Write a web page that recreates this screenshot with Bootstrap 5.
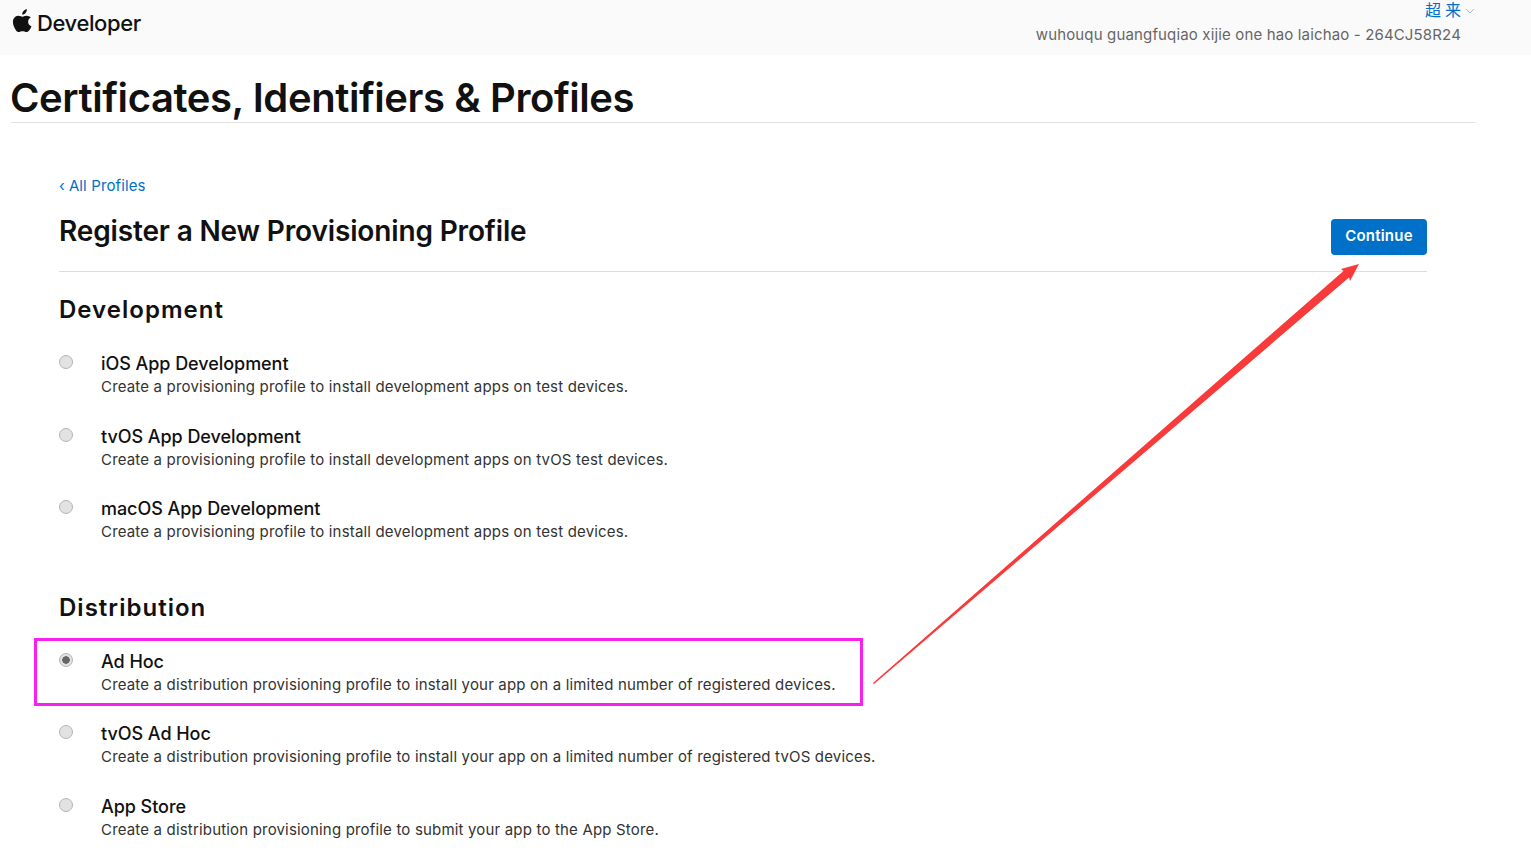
<!DOCTYPE html>
<html lang="en">
<head>
    <meta charset="UTF-8">
    <meta name="viewport" content="width=device-width, initial-scale=1.0">
    <title>Certificates, Identifiers &amp; Profiles</title>
    <link href="https://cdn.jsdelivr.net/npm/bootstrap@5.3.0/dist/css/bootstrap.min.css" rel="stylesheet">
    <style>
        body {
            font-family: Inter, "Noto Sans CJK SC", sans-serif;
            color: #111;
            position: relative;
            height: 857px;
            overflow: hidden;
        }

        /* Top bar */
        .top-bar { height: 55px; background: #fafafa; padding: 0 56px 0 12px; }
        .brand { font-size: 22px; font-weight: 500; letter-spacing: -.4px; color: #111; gap: 4px; margin-top: 10px; line-height: 27px; }
        .account { width: 470px; text-align: right; }
        .account-name { color: #0070c9; font-size: 16px; line-height: 21px; letter-spacing: 4px; }
        .account-team { color: #666; font-size: 15px; line-height: 28px; letter-spacing: .15px; padding-right: 14px; }

        /* Page heading */
        .page-head { margin: 0 56px 0 11px; height: 68px; border-bottom: 1px solid #e0e0e0; }
        .page-title { font-size: 40px; font-weight: 600; letter-spacing: -.42px; line-height: 86px; margin: 0 0 0 -1px; }

        /* Main section */
        .main-area { margin: 0 104px 0 59px; padding-top: 52px; }
        .back-link { color: #0070c9; font-size: 15px; line-height: 22px; letter-spacing: .12px; text-decoration: none; display: block; }
        .form-head { height: 67px; border-bottom: 1px solid #ddd; margin-top: 8px; padding-top: 6px; }
        .form-title { font-size: 28px; font-weight: 600; letter-spacing: -.15px; line-height: 40px; margin: 0; }
        .btn-continue { background: #0070c9; border: 0; border-radius: 4px; color: #fff; font-size: 15px; font-weight: 600; letter-spacing: .2px; width: 96px; height: 36px; padding: 0 0 2px; margin-top: 8px; }

        .group-title { font-size: 24px; font-weight: 600; letter-spacing: 1.02px; line-height: 32px; margin: 0; }
        .group-dev { margin-top: 22px; }
        .group-dist { margin-top: 22px; }
        .profile-list { margin-top: 26px; }
        .profile-row { height: 72.5px; gap: 28px; }
        .profile-row input { appearance: none; width: 14px; height: 14px; margin: 3px 0 0; flex: none; border-radius: 50%; background: #e2e2e2; border: 1px solid #b5b5b5; }
        .profile-row input:checked { background: radial-gradient(circle, #666 0 3.5px, #e2e2e2 4px); }
        .profile-name { font-size: 18px; font-weight: 500; letter-spacing: -.05px; line-height: 24px; }
        .profile-desc { font-size: 15px; line-height: 22px; color: #333; letter-spacing: .175px; }

        /* Annotations drawn on top of the screenshot */
        .mark-box { position: absolute; left: 34px; top: 638px; width: 829px; height: 68px; border: 3px solid #f81ff0; }
        .mark-arrow { position: absolute; left: 0; top: 0; pointer-events: none; }
    </style>
</head>
<body>
    <header class="top-bar d-flex justify-content-between align-items-start">
        <div class="brand d-flex align-items-start">
            <svg width="21" height="25" viewBox="0 0 20 24" class="flex-shrink-0" style="margin-top:-2px">
                <path fill="#111" d="M14.2 1.2c.1 1.5-.5 2.7-1.3 3.6-.9 1-2 1.6-3.2 1.5-.1-1.4.5-2.7 1.3-3.5.9-1 2.1-1.6 3.2-1.6zM18 9c-1.7 1-2.6 2.4-2.6 4.1 0 2 1.1 3.5 3.2 4.3-.5 1.5-1.200 2.800-2.100 4-.8 1.100-1.600 1.700-2.600 1.700-.6 0-1.200-.2-1.900-.5-.7-.3-1.300-.4-1.900-.4-.7 0-1.400.1-2 .4-.7.3-1.300.5-1.800.5-1 0-1.900-.7-2.800-2C1.700 18.300.800 15.600.800 13.400c0-2.100.8-3.800 2-4.800 1-.8 2.100-1.200 3.200-1.200.7 0 1.500.2 2.400.5.7.3 1.200.4 1.400.4.300 0 .8-.1 1.600-.5.900-.3 1.700-.5 2.400-.4 1.800.1 3.200.8 4.200 1.600z"/>
            </svg>
            <span>Developer</span>
        </div>
        <div class="account">
            <div class="account-name">超来<svg width="10" height="6" viewBox="0 0 10 6" style="vertical-align:2px"><path d="M1 1l4 4 4-4" fill="none" stroke="#9dbcd8" stroke-width="1"/></svg></div>
            <div class="account-team">wuhouqu guangfuqiao xijie one hao laichao - 264CJ58R24</div>
        </div>
    </header>

    <div class="page-head">
        <h1 class="page-title">Certificates, Identifiers &amp; Profiles</h1>
    </div>

    <main class="main-area">
        <a href="#" class="back-link"><span class="me-1">‹</span>All Profiles</a>
        <div class="form-head d-flex justify-content-between align-items-start">
            <h2 class="form-title">Register a New Provisioning Profile</h2>
            <button class="btn btn-continue">Continue</button>
        </div>

        <section class="group-dev">
            <h3 class="group-title">Development</h3>
            <div class="profile-list">
                <label class="profile-row d-flex align-items-start">
                    <input type="radio" name="profile">
                    <span>
                        <span class="profile-name d-block">iOS App Development</span>
                        <span class="profile-desc d-block">Create a provisioning profile to install development apps on test devices.</span>
                    </span>
                </label>
                <label class="profile-row d-flex align-items-start">
                    <input type="radio" name="profile">
                    <span>
                        <span class="profile-name d-block">tvOS App Development</span>
                        <span class="profile-desc d-block">Create a provisioning profile to install development apps on tvOS test devices.</span>
                    </span>
                </label>
                <label class="profile-row d-flex align-items-start">
                    <input type="radio" name="profile">
                    <span>
                        <span class="profile-name d-block">macOS App Development</span>
                        <span class="profile-desc d-block">Create a provisioning profile to install development apps on test devices.</span>
                    </span>
                </label>
            </div>
        </section>

        <section class="group-dist">
            <h3 class="group-title">Distribution</h3>
            <div class="profile-list">
                <label class="profile-row d-flex align-items-start">
                    <input type="radio" name="profile" checked>
                    <span>
                        <span class="profile-name d-block">Ad Hoc</span>
                        <span class="profile-desc d-block">Create a distribution provisioning profile to install your app on a limited number of registered devices.</span>
                    </span>
                </label>
                <label class="profile-row d-flex align-items-start">
                    <input type="radio" name="profile">
                    <span>
                        <span class="profile-name d-block">tvOS Ad Hoc</span>
                        <span class="profile-desc d-block">Create a distribution provisioning profile to install your app on a limited number of registered tvOS devices.</span>
                    </span>
                </label>
                <label class="profile-row d-flex align-items-start">
                    <input type="radio" name="profile">
                    <span>
                        <span class="profile-name d-block">App Store</span>
                        <span class="profile-desc d-block">Create a distribution provisioning profile to submit your app to the App Store.</span>
                    </span>
                </label>
            </div>
        </section>
    </main>

    <!-- Annotations -->
    <div class="mark-box"></div>
    <svg class="mark-arrow" width="1531" height="857" viewBox="0 0 1531 857">
        <polygon fill="#f93a3a" points="873,683 1343.500,271 1341,269 1359,264 1350,281 1349,277.500 874,684"/>
    </svg>
</body>
</html>
